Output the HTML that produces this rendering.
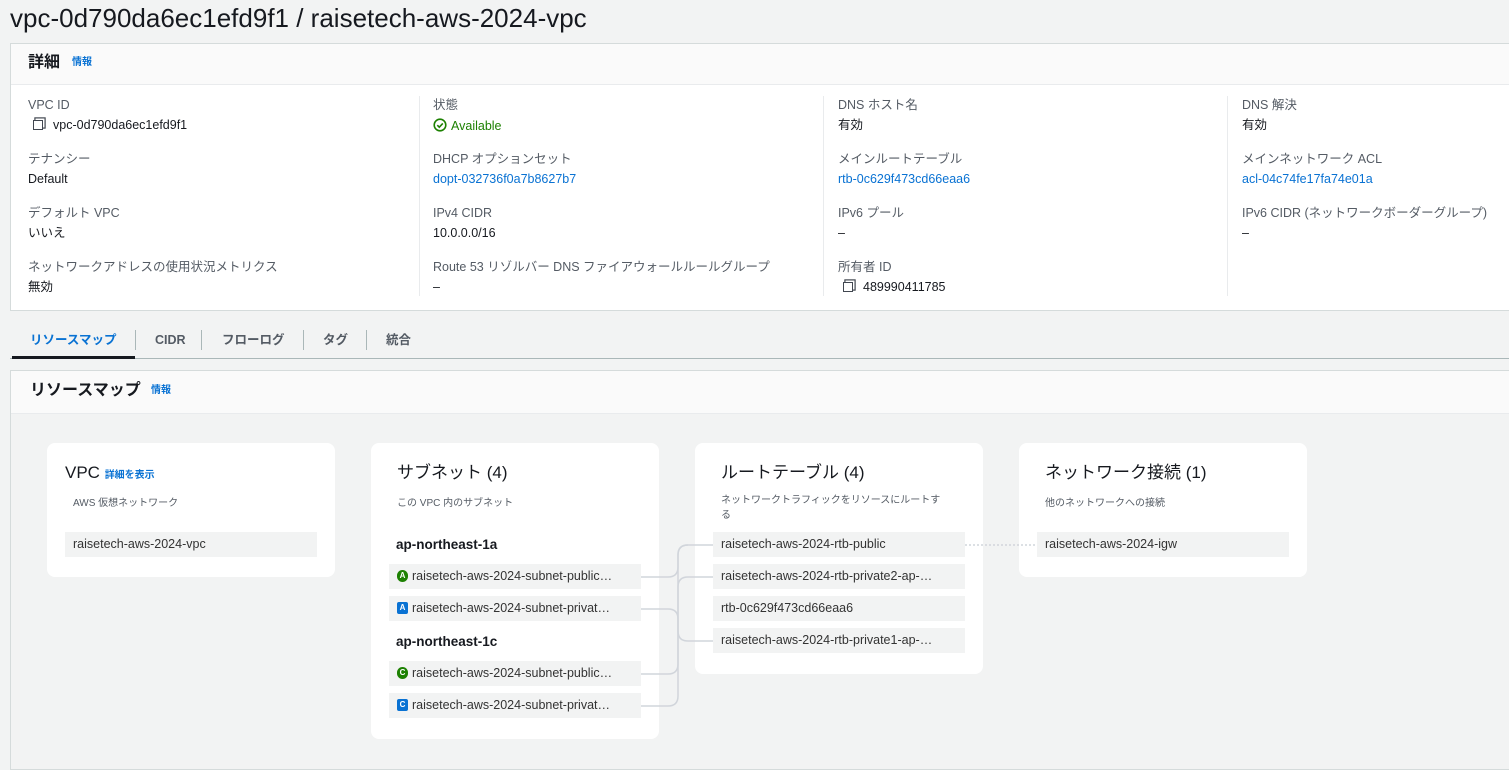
<!DOCTYPE html>
<html><head><meta charset="utf-8"><style>
*{box-sizing:border-box;margin:0;padding:0}
body{width:1509px;height:749px;overflow:hidden;background:#f2f3f3;font-family:"Liberation Sans","Noto Sans CJK JP",sans-serif;color:#16191f;position:relative}
.a{position:absolute;white-space:nowrap;line-height:1.2}
.lbl{font-size:12.5px;color:#545b64}
.val{font-size:12.5px;color:#16191f}
.lnk{color:#0972d3}
.card{position:absolute;background:#fff;border-radius:8px}
.ct{position:absolute;font-size:17px;color:#16191f;line-height:20px}
.cs{position:absolute;font-size:10px;color:#545b64}
.it{position:absolute;background:#f2f3f3;height:25px;width:252px;font-size:12.5px;color:#333;line-height:25px;padding-left:8px;white-space:nowrap;overflow:hidden}
.bd{display:inline-block;width:11px;height:12px;color:#fff;font-size:8px;font-weight:bold;text-align:center;line-height:12px;vertical-align:middle;margin:-2px 4px 0 0}
.g{background:#1d8102;border-radius:6px}
.b{background:#0972d3;border-radius:2px}
.vd{position:absolute;top:96px;width:1px;height:200px;background:#e9ebed}
.cp{display:inline-block;width:10px;height:10px;border:1.2px solid #414750;margin-right:10px;vertical-align:-1px;box-shadow:2px -2px 0 -0.5px #fff,2px -2px 0 0.7px #414750}
.tab{position:absolute;top:332px;font-size:12.5px;font-weight:bold;color:#545b64;line-height:16px;white-space:nowrap}
</style></head><body>
<div class="a" style="left:10px;top:2px;font-size:26px;color:#16191f;line-height:32px">vpc-0d790da6ec1efd9f1 / raisetech-aws-2024-vpc</div>

<div class="a" style="left:10px;top:43px;width:1510px;height:268px;background:#fff;border:1px solid #d5dbdb"></div>
<div class="a" style="left:11px;top:44px;width:1500px;height:41px;background:#fafafa;border-bottom:1px solid #e9ebed"></div>
<div class="a" style="left:28px;top:53px;font-size:16px;font-weight:bold">詳細</div>
<div class="a lnk" style="left:72px;top:57px;font-size:10px;font-weight:bold">情報</div>
<div class="vd" style="left:419px"></div><div class="vd" style="left:823px"></div><div class="vd" style="left:1227px"></div>

<div class="a lbl" style="left:28px;top:98px">VPC ID</div>
<div class="a val" style="left:33px;top:118px"><span class="cp"></span>vpc-0d790da6ec1efd9f1</div>
<div class="a lbl" style="left:28px;top:152px">テナンシー</div>
<div class="a val" style="left:28px;top:172px">Default</div>
<div class="a lbl" style="left:28px;top:206px">デフォルト VPC</div>
<div class="a val" style="left:28px;top:226px">いいえ</div>
<div class="a lbl" style="left:28px;top:260px">ネットワークアドレスの使用状況メトリクス</div>
<div class="a val" style="left:28px;top:280px">無効</div>

<div class="a lbl" style="left:433px;top:98px">状態</div>
<div class="a val" style="left:433px;top:118px;color:#1d8102"><svg width="14" height="14" viewBox="0 0 14 14" style="vertical-align:-2px;margin-right:4px"><circle cx="7" cy="7" r="5.8" fill="none" stroke="#1d8102" stroke-width="1.6"/><path d="M4.3 7.2l2 2 3.5-3.8" fill="none" stroke="#1d8102" stroke-width="1.6"/></svg>Available</div>
<div class="a lbl" style="left:433px;top:152px">DHCP オプションセット</div>
<div class="a val lnk" style="left:433px;top:172px">dopt-032736f0a7b8627b7</div>
<div class="a lbl" style="left:433px;top:206px">IPv4 CIDR</div>
<div class="a val" style="left:433px;top:226px">10.0.0.0/16</div>
<div class="a lbl" style="left:433px;top:260px">Route 53 リゾルバー DNS ファイアウォールルールグループ</div>
<div class="a val" style="left:433px;top:280px">–</div>

<div class="a lbl" style="left:838px;top:98px">DNS ホスト名</div>
<div class="a val" style="left:838px;top:118px">有効</div>
<div class="a lbl" style="left:838px;top:152px">メインルートテーブル</div>
<div class="a val lnk" style="left:838px;top:172px">rtb-0c629f473cd66eaa6</div>
<div class="a lbl" style="left:838px;top:206px">IPv6 プール</div>
<div class="a val" style="left:838px;top:226px">–</div>
<div class="a lbl" style="left:838px;top:260px">所有者 ID</div>
<div class="a val" style="left:843px;top:280px"><span class="cp"></span>489990411785</div>

<div class="a lbl" style="left:1242px;top:98px">DNS 解決</div>
<div class="a val" style="left:1242px;top:118px">有効</div>
<div class="a lbl" style="left:1242px;top:152px">メインネットワーク ACL</div>
<div class="a val lnk" style="left:1242px;top:172px">acl-04c74fe17fa74e01a</div>
<div class="a lbl" style="left:1242px;top:206px">IPv6 CIDR (ネットワークボーダーグループ)</div>
<div class="a val" style="left:1242px;top:226px">–</div>

<div class="a" style="left:10px;top:358px;width:1500px;height:1px;background:#aab7b8"></div>
<div class="a" style="left:12px;top:356px;width:123px;height:3px;background:#16191f"></div>
<div class="tab" style="left:30px;color:#0972d3">リソースマップ</div>
<div class="a" style="left:135px;top:330px;width:1px;height:20px;background:#aab7b8"></div>
<div class="tab" style="left:155px">CIDR</div>
<div class="a" style="left:201px;top:330px;width:1px;height:20px;background:#aab7b8"></div>
<div class="tab" style="left:222px">フローログ</div>
<div class="a" style="left:303px;top:330px;width:1px;height:20px;background:#aab7b8"></div>
<div class="tab" style="left:323px">タグ</div>
<div class="a" style="left:366px;top:330px;width:1px;height:20px;background:#aab7b8"></div>
<div class="tab" style="left:386px">統合</div>

<div class="a" style="left:10px;top:370px;width:1510px;height:400px;background:#f2f3f3;border:1px solid #d5dbdb"></div>
<div class="a" style="left:11px;top:371px;width:1500px;height:43px;background:#fafafa;border-bottom:1px solid #e9ebed"></div>
<div class="a" style="left:30px;top:381px;font-size:16px;font-weight:bold">リソースマップ</div>
<div class="a lnk" style="left:151px;top:385px;font-size:10px;font-weight:bold">情報</div>

<div class="card" style="left:47px;top:443px;width:288px;height:134px"></div>
<div class="ct" style="left:65px;top:463px">VPC <span style="font-size:10px;font-weight:bold;color:#0972d3">詳細を表示</span></div>
<div class="cs" style="left:73px;top:494px">AWS 仮想ネットワーク</div>
<div class="it" style="left:65px;top:532px">raisetech-aws-2024-vpc</div>

<div class="card" style="left:371px;top:443px;width:288px;height:296px"></div>
<div class="ct" style="left:397px;top:463px">サブネット (4)</div>
<div class="cs" style="left:397px;top:494px">この VPC 内のサブネット</div>
<div class="a" style="left:396px;top:537px;font-size:13.5px;font-weight:bold">ap-northeast-1a</div>
<div class="it" style="left:389px;top:564px"><span class="bd g">A</span>raisetech-aws-2024-subnet-public…</div>
<div class="it" style="left:389px;top:596px"><span class="bd b">A</span>raisetech-aws-2024-subnet-privat…</div>
<div class="a" style="left:396px;top:634px;font-size:13.5px;font-weight:bold">ap-northeast-1c</div>
<div class="it" style="left:389px;top:661px"><span class="bd g">C</span>raisetech-aws-2024-subnet-public…</div>
<div class="it" style="left:389px;top:693px"><span class="bd b">C</span>raisetech-aws-2024-subnet-privat…</div>

<div class="card" style="left:695px;top:443px;width:288px;height:231px"></div>
<div class="ct" style="left:721px;top:463px">ルートテーブル (4)</div>
<div class="cs" style="left:721px;top:493px;line-height:15px">ネットワークトラフィックをリソースにルートす<br>る</div>
<div class="it" style="left:713px;top:532px">raisetech-aws-2024-rtb-public</div>
<div class="it" style="left:713px;top:564px">raisetech-aws-2024-rtb-private2-ap-…</div>
<div class="it" style="left:713px;top:596px">rtb-0c629f473cd66eaa6</div>
<div class="it" style="left:713px;top:628px">raisetech-aws-2024-rtb-private1-ap-…</div>

<div class="card" style="left:1019px;top:443px;width:288px;height:134px"></div>
<div class="ct" style="left:1045px;top:463px">ネットワーク接続 (1)</div>
<div class="cs" style="left:1045px;top:494px">他のネットワークへの接続</div>
<div class="it" style="left:1037px;top:532px">raisetech-aws-2024-igw</div>

<svg class="a" style="left:0;top:0" width="1509" height="749"><g fill="none" stroke="#d1d5db" stroke-width="1.5">
<path d="M641 577H668Q678 577 678 567V555Q678 545 688 545H713"/>
<path d="M641 674H668Q678 674 678 664V555Q678 545 688 545"/>
<path d="M641 609H668Q678 609 678 619V631Q678 641 688 641H713"/>
<path d="M641 706H668Q678 706 678 696V587Q678 577 688 577H713"/>
<path d="M965 545H1037" stroke-dasharray="2 2"/></g></svg>
</body></html>
